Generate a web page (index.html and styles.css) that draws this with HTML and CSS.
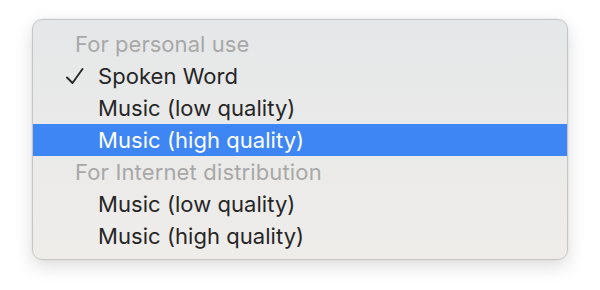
FILE: index.html
```html
<!DOCTYPE html>
<html>
<head>
<meta charset="utf-8">
<link rel="stylesheet" href="styles.css">
</head>
<body>
<div class="menu">
  <div class="row header">For personal use</div>
  <div class="row item"><svg class="check" width="18" height="17" viewBox="0 0 18 17"><path d="M1 9.5 L6.5 15 L16.5 1" fill="none" stroke="#262626" stroke-width="1.9" stroke-linecap="round" stroke-linejoin="round"/></svg>Spoken Word</div>
  <div class="row item">Music (low quality)</div>
  <div class="row item selected">Music (high quality)</div>
  <div class="row header wide">For Internet distribution</div>
  <div class="row item">Music (low quality)</div>
  <div class="row item">Music (high quality)</div>
</div>
</body>
</html>
```

FILE: styles.css
```css
html, body {
  margin: 0;
  padding: 0;
  background: #ffffff;
}
body {
  padding: 19px 32px 0 32px;
  width: 600px;
  height: 290px;
  box-sizing: border-box;
  font-family: Inter, "Liberation Sans", sans-serif;
}
.menu {
  width: 536px;
  box-sizing: border-box;
  padding: 8px 0 7px 0;
  border-radius: 10px;
  border: 1px solid #c6c6c6;
  background: linear-gradient(180deg, #e6e7e8 0%, #eaeaea 50%, #efedea 100%);
  box-shadow: 0 6px 18px rgba(0,0,0,0.14), 0 0 2px rgba(0,0,0,0.08);
}
.row {
  height: 32px;
  display: flex;
  align-items: center;
  font-size: 22px;
  position: relative;
  letter-spacing: 0.05px;
}
.header {
  padding-left: 42px;
  color: #a8a8a8;
}
.header.wide {
  letter-spacing: 0.15px;
}
.item {
  padding-left: 65px;
  color: #262626;
}
.selected {
  background: #3e86f4;
  color: #ffffff;
}
.check {
  position: absolute;
  left: 33px;
  top: 8px;
}
```
